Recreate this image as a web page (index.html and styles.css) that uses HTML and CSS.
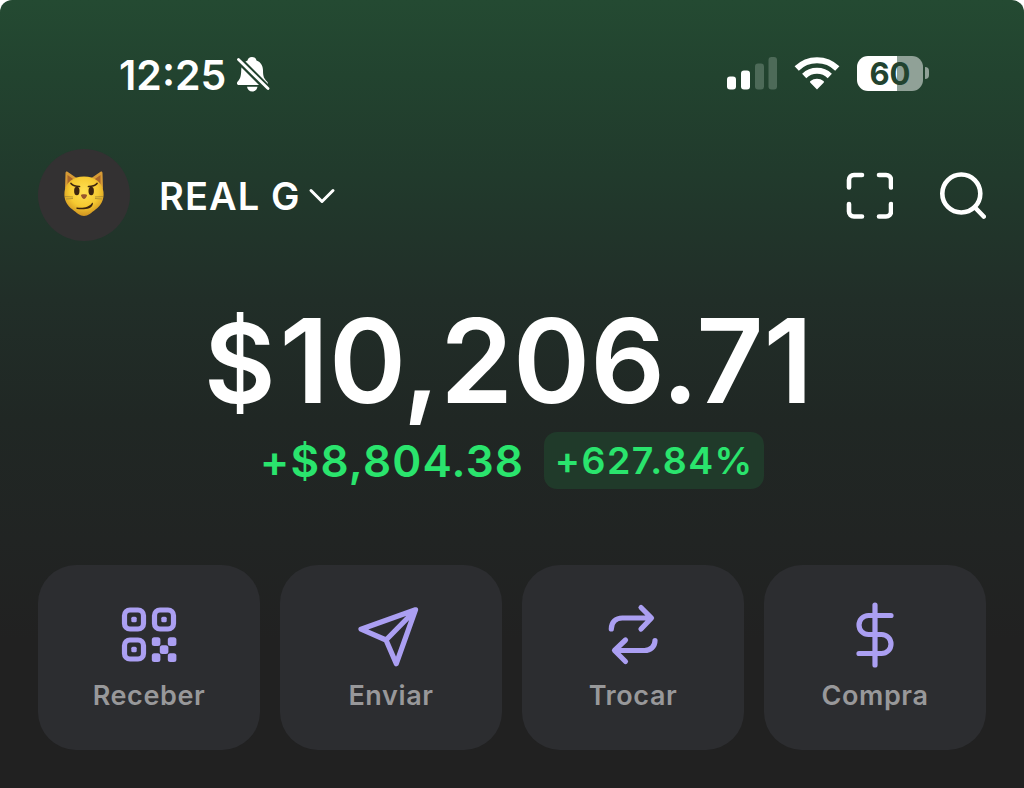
FILE: index.html
```html
<!DOCTYPE html>
<html lang="pt">
<head>
    <meta charset="UTF-8">
    <meta name="viewport" content="width=device-width, initial-scale=1.0">
    <title>Carteira</title>
    <link rel="stylesheet" href="styles.css">
</head>
<body>
    <div class="screen">
        <div class="status-bar">
            <span class="time">12:25</span>
            <svg class="bell" width="34" height="38" viewBox="0 0 34 38">
                <path fill="#fff" d="M16 2c2.600 0 4 1.500 4.500 3.500 4.500 1.500 6.500 5.500 6.500 10 0 6 1 8 4 11 1.500 1.500 1 3.500-1 3.500H3c-2 0-2.700-2-1.300-3.500C4.500 23.500 5 21 5.200 15.500 5.300 11 7.500 7 11.500 5.500 12 3.500 13.400 2 16 2zM11 31.800h10.500c-.5 3-2.500 4.700-5.200 4.700s-4.800-1.700-5.300-4.700z"/>
                <path stroke="#22432f" stroke-width="7" d="M0 2l34 34"/>
                <path stroke="#fff" stroke-width="2.800" stroke-linecap="round" d="M2.500 4.500l29.500 29"/>
            </svg>
            <div class="indicators">
                <svg width="50" height="34" viewBox="0 0 50 34">
                    <rect x="0" y="20.500" width="9" height="13" rx="3" fill="#fff"/>
                    <rect x="14" y="14.500" width="9" height="19" rx="3" fill="#fff"/>
                    <rect x="28" y="7.500" width="9" height="26" rx="3" fill="#4d6a58"/>
                    <rect x="41.500" y="1" width="8.500" height="32.500" rx="3" fill="#4d6a58"/>
                </svg>
                <svg width="46" height="34" viewBox="0 0 46 34" fill="none" stroke="#fff" stroke-width="6">
                    <path d="M2.700 12.500a29 29 0 0 1 40.600 0"/>
                    <path d="M10.200 20a18.500 18.500 0 0 1 25.600 0"/>
                    <path fill="#fff" stroke="none" d="M23 33.500l-6.600-6.700c-.6-.6-.5-1.200.1-1.700a10.300 10.300 0 0 1 13 0c.6.5.7 1.100.1 1.700z"/>
                </svg>
                <div class="battery">
                    <div class="battery-body">60</div>
                    <div class="battery-cap"></div>
                </div>
            </div>
        </div>

        <div class="header">
            <div class="avatar">
                <svg width="44" height="48" viewBox="0 0 44 48">
                    <defs>
                        <radialGradient id="fur" cx="50%" cy="38%" r="62%">
                            <stop offset="0" stop-color="#ffe052"/>
                            <stop offset=".6" stop-color="#f6c931"/>
                            <stop offset="1" stop-color="#cf9220"/>
                        </radialGradient>
                    </defs>
                    <path fill="#d69a35" d="M3.500 2c0-1.500 1-2 2-1.200L16 8 3 18zM40.500 2c0-1.500-1-2-2-1.200L28 8l13 10z"/>
                    <path fill="#a8652b" d="M5.500 4l7 5-7 5zM38.500 4l-7 5 7 5z"/>
                    <path fill="url(#fur)" d="M22 5.500c11 0 18.500 6 19.500 15.500.8 8-2.500 13.500-8 17.500-4 3-7.500 6.500-11.500 6.500s-7.500-3.500-11.500-6.500C5 34.500 1.700 29 2.500 21 3.500 11.500 11 5.500 22 5.500z"/>
                    <ellipse cx="14.800" cy="20" rx="2.700" ry="4.200" fill="#3b2410"/>
                    <ellipse cx="29.200" cy="20" rx="2.700" ry="4.200" fill="#3b2410"/>
                    <path fill="none" stroke="#3b2410" stroke-width="1.700" stroke-linecap="round" d="M9 12.500c2.500 2.800 5.500 3 8.500 3M35 12.500c-2.500 2.800-5.500 3-8.500 3"/>
                    <path fill="none" stroke="#b59432" stroke-width="1" d="M3 25.500l8 .5M4 28l7-.5M41 25.500l-8 .5M40 28l-7-.5"/>
                    <path fill="#98562d" d="M19 24c0-1 6-1 6 0 0 1.700-2 4-3 4s-3-2.300-3-4z"/>
                    <path fill="#3b2410" d="M15 36.500c6 .8 12-.2 14.800-4.300.7-1 1.300-.4 1.100.7-.8 5-9 6.200-15.900 5-1-.3-1-1.500 0-1.400z"/>
                </svg>
            </div>
            <span class="account">REAL G</span>
            <svg class="chevron" width="28" height="18" viewBox="0 0 28 18">
                <path d="M3 4.500l11 11 11-11"/>
            </svg>
            <div class="header-icons">
                <svg class="line-icon" width="50" height="50" viewBox="0 0 50 50">
                    <path d="M6 17.500V10a5 5 0 0 1 5-5h8M36 5h7a5 5 0 0 1 5 5v7.500M48 34v7.500a5 5 0 0 1-5 5h-7M19 46.500h-8a5 5 0 0 1-5-5V34"/>
                </svg>
                <svg class="line-icon" width="50" height="50" viewBox="0 0 50 50">
                    <circle cx="25.300" cy="23.500" r="19"/>
                    <path d="M39 37.500l8.700 9"/>
                </svg>
            </div>
        </div>

        <div class="balance"><span class="currency">$</span>10,206.71</div>
        <div class="change">
            <span class="change-amount">+$8,804.38</span>
            <span class="change-percent">+627.84%</span>
        </div>

        <div class="actions">
            <div class="action">
                <svg class="icon" width="72" height="72" viewBox="0 0 72 72">
                    <rect x="11.500" y="11" width="19" height="19" rx="5.500"/>
                    <rect x="41.500" y="11" width="19" height="19" rx="5.500"/>
                    <rect x="11.500" y="41" width="19" height="19" rx="5.500"/>
                    <g class="dots">
                        <rect x="18.300" y="17.800" width="5.400" height="5.400" rx="1.500"/>
                        <rect x="48.300" y="17.800" width="5.400" height="5.400" rx="1.500"/>
                        <rect x="18.300" y="47.800" width="5.400" height="5.400" rx="1.500"/>
                        <rect x="38.800" y="38.300" width="8.600" height="8.600" rx="2.500"/>
                        <rect x="54.800" y="38.300" width="8.600" height="8.600" rx="2.500"/>
                        <rect x="46.800" y="46.300" width="8.600" height="8.600" rx="2.500"/>
                        <rect x="38.800" y="54.300" width="8.600" height="8.600" rx="2.500"/>
                        <rect x="54.800" y="54.300" width="8.600" height="8.600" rx="2.500"/>
                    </g>
                </svg>
                <span class="label">Receber</span>
            </div>
            <div class="action">
                <svg class="icon" width="72" height="72" viewBox="0 0 72 72">
                    <path d="M60.500 10.800L6 30.200l25 10.800 10.300 23.700L60.500 10.800zM31 41l29.500-30"/>
                </svg>
                <span class="label">Enviar</span>
            </div>
            <div class="action">
                <svg class="icon" width="72" height="72" viewBox="0 0 72 72">
                    <path d="M14.300 30c0-7 4.500-11 11-11H54M44 8.500L54.500 19 44 30M58 41.500c0 6-4.500 10-10.500 10H18M28.500 41L17.500 51.500l11 11"/>
                </svg>
                <span class="label">Trocar</span>
            </div>
            <div class="action">
                <svg class="icon" width="72" height="72" viewBox="0 0 72 72">
                    <path d="M36 6v60M52 16.500H29.500a9.500 9.500 0 0 0 0 19h13a9.500 9.500 0 0 1 0 19H20"/>
                </svg>
                <span class="label">Compra</span>
            </div>
        </div>
    </div>
</body>
</html>
```
FILE: styles.css
```css
body {
    margin: 0;
    background-color: #fff;
    font-family: Inter, "Liberation Sans", sans-serif;
    color: #fff;
}
.screen {
    box-sizing: border-box;
    width: 1024px;
    height: 788px;
    padding: 50px 38px 0;
    border-radius: 12px 12px 0 0;
    background: linear-gradient(#244a32 0, #22432f 75px, #213a2c 175px, #212e28 300px, #202724 420px, #212423 540px, #212121 640px, #212121 100%);
    overflow: hidden;
}
.status-bar {
    display: flex;
    align-items: center;
    height: 48px;
    padding: 0 57px 0 81px;
}
.time {
    padding-top: 1px;
    font-size: 41px;
    font-weight: 600;
    line-height: 48px;
}
.bell {
    margin-left: 10px;
}
.indicators {
    display: flex;
    align-items: center;
    gap: 17px;
    margin-left: auto;
    padding-bottom: 2px;
}
.battery {
    display: flex;
    align-items: center;
    gap: 2px;
}
.battery-body {
    width: 66px;
    height: 35px;
    border-radius: 11px;
    background: linear-gradient(90deg, #fff 60%, #90a197 60%);
    color: #22432f;
    font-size: 31px;
    font-weight: 700;
    line-height: 35px;
    text-align: center;
}
.battery-cap {
    width: 4px;
    height: 12px;
    border-radius: 0 4px 4px 0;
    background-color: #90a197;
}
.header {
    display: flex;
    align-items: center;
    height: 92px;
    margin-top: 51px;
}
.avatar {
    display: flex;
    align-items: center;
    justify-content: center;
    width: 92px;
    height: 92px;
    border-radius: 50%;
    background-color: #333132;
}
.account {
    margin-left: 29px;
    padding-top: 2px;
    font-size: 38px;
    font-weight: 600;
    letter-spacing: 1.1px;
    line-height: 48px;
}
.chevron {
    margin-left: 7px;
}
.chevron path,
.line-icon {
    fill: none;
    stroke: #fff;
    stroke-linecap: round;
    stroke-linejoin: round;
}
.chevron path {
    stroke-width: 3;
}
.line-icon {
    stroke-width: 4.6;
}
.header-icons {
    display: flex;
    gap: 43px;
    margin-left: auto;
}
.balance {
    height: 142px;
    margin-top: 49px;
    padding-right: 7px;
    font-size: 117px;
    font-weight: 600;
    line-height: 142px;
    text-align: center;
    white-space: nowrap;
}
.currency {
    margin-right: 4px;
    font-size: 110px;
    line-height: 1;
}
.change {
    display: flex;
    justify-content: center;
    gap: 20px;
    height: 57px;
    color: #2ae46d;
    line-height: 58px;
}
.change-amount {
    font-size: 44px;
    font-weight: 600;
    letter-spacing: 1.2px;
}
.change-percent {
    width: 220px;
    border-radius: 13px;
    background-color: #203a2a;
    font-size: 37.5px;
    font-weight: 600;
    letter-spacing: 1.5px;
    text-align: center;
}
.actions {
    display: grid;
    grid-template-columns: repeat(4, 1fr);
    gap: 20px;
    margin-top: 76px;
}
.action {
    display: flex;
    flex-direction: column;
    align-items: center;
    box-sizing: border-box;
    height: 185px;
    padding-top: 34px;
    border-radius: 38px;
    background-color: #2c2d30;
}
.icon {
    fill: none;
    stroke: #ab9ff2;
    stroke-width: 5.2;
    stroke-linecap: round;
    stroke-linejoin: round;
}
.dots {
    fill: #ab9ff2;
    stroke: none;
}
.label {
    margin-top: 9px;
    color: #98989a;
    font-size: 27px;
    font-weight: 600;
    letter-spacing: 0.6px;
    line-height: 32px;
}
```
